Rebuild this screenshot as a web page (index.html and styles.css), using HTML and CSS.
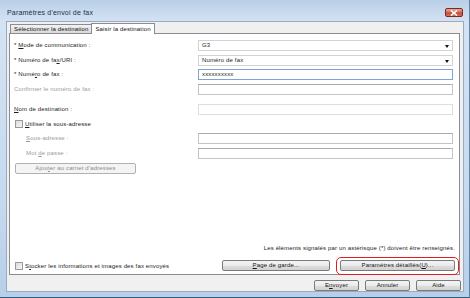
FILE: index.html
```html
<!DOCTYPE html>
<html lang="fr">
<head>
    <meta charset="UTF-8">
    <title>Paramètres d'envoi de fax</title>
    <link rel="stylesheet" href="styles.css">
</head>
<body>
    <div class="window">
        <div class="titlebar">
            <span class="title">Paramètres d'envoi de fax</span>
            <div class="close">
                <svg width="8" height="6" viewBox="0 0 8 6"><path d="M1 0.5 L7 5.5 M7 0.5 L1 5.5" stroke="#fff" stroke-width="1.6"/></svg>
            </div>
        </div>

        <div class="client">
            <div class="tabs">
                <div class="tab">Sélectionner la destination</div>
                <div class="tab active">Saisir la destination</div>
            </div>

            <div class="panel">
                <div class="form">
                    <label>* <u>M</u>ode de communication :</label>
                    <div class="field combo">G3<span class="arrow"></span></div>

                    <label>* Numéro de fa<u>x</u>/URI :</label>
                    <div class="field combo">Numéro de fax<span class="arrow"></span></div>

                    <label>* Numé<u>r</u>o de fax :</label>
                    <div class="field focus">xxxxxxxxxx</div>

                    <label class="off">Confirmer le numéro de fax :</label>
                    <div class="field"></div>
                </div>

                <div class="sep"></div>

                <div class="form single">
                    <label><u>N</u>om de destination :</label>
                    <div class="field faint"></div>
                </div>

                <div class="check-row sub-check">
                    <span class="box"></span>
                    <span><u>U</u>tiliser la sous-adresse</span>
                </div>

                <div class="form sub">
                    <label class="off indent"><u>S</u>ous-adresse :</label>
                    <div class="field"></div>

                    <label class="off indent">Mot <u>d</u>e passe :</label>
                    <div class="field"></div>
                </div>

                <button class="btn add-btn" disabled>Ajou<u>t</u>er au carnet d'adresses</button>

                <p class="note">Les éléments signalés par un astérisque (*) doivent être renseignés.</p>

                <div class="sep"></div>

                <div class="bottom-row">
                    <div class="check-row">
                        <span class="box"></span>
                        <span>S<u>t</u>ocker les informations et images des fax envoyés</span>
                    </div>
                    <button class="btn cover-btn"><u>P</u>age de garde...</button>
                    <button class="btn detail-btn">Paramètres détaillés(<u>U</u>)...</button>
                </div>
            </div>

            <div class="footer">
                <button class="btn">E<u>n</u>voyer</button>
                <button class="btn">Annuler</button>
                <button class="btn">Aide</button>
            </div>
        </div>
    </div>
</body>
</html>
```

FILE: styles.css
```css
* {
    box-sizing: border-box;
}
body {
    margin: 0;
    font-family: "Liberation Sans", Arial, sans-serif;
    font-size: 6px;
    letter-spacing: 0.15px;
    color: #1b1b1b;
}
u {
    text-decoration: underline;
}
.window {
    width: 470px;
    height: 298px;
    display: flex;
    flex-direction: column;
    padding: 0 5px 5px 6px;
    background: linear-gradient(#b9cfe7, #d4e3f3 22px, #c6d9ee 200px, #b7cfe8);
    border-bottom: 1px solid #2f5f7e;
    border-right: 1px solid #5c86a8;
}
.titlebar {
    height: 21px;
    flex: 0 0 21px;
    display: flex;
    align-items: flex-start;
    justify-content: space-between;
    padding-top: 8px;
    padding-left: 1px;
}
.title {
    font-size: 7px;
    line-height: 9px;
    letter-spacing: 0.2px;
    color: #1e2f47;
}
.close {
    width: 18px;
    height: 9px;
    margin-right: 1px;
    border: 1px solid #7a2a22;
    border-radius: 2px;
    background: linear-gradient(#e7a99c, #d6705f 45%, #c34834 55%, #d2735d);
    display: flex;
    align-items: center;
    justify-content: center;
}
.client {
    height: 271px;
    flex: 0 0 271px;
    background: #f0f0f0;
    border: 1px solid #98abc0;
    padding: 0 3px 0 2px;
    display: flex;
    flex-direction: column;
}
.tabs {
    display: flex;
    align-items: flex-end;
    height: 11px;
    padding-left: 1px;
}
.tab {
    height: 9px;
    line-height: 8px;
    padding: 0 3px;
    border: 1px solid #898c95;
    border-bottom: none;
    background: linear-gradient(#f3f3f3, #e6e6e6 50%, #d9d9d9);
    color: #111;
}
.tab.active {
    height: 11px;
    line-height: 10px;
    margin-left: -1px;
    margin-bottom: -1px;
    background: #fff;
    position: relative;
    z-index: 1;
}
.panel {
    height: 242px;
    border: 1px solid #898c95;
    background: #fff;
    padding: 6px 4px 3px 4px;
    display: flex;
    flex-direction: column;
}
.form {
    display: grid;
    grid-template-columns: 184px 255px;
    grid-auto-rows: 11px;
    row-gap: 3.67px;
    align-items: center;
}
.form label {
    line-height: 11px;
    white-space: nowrap;
}
.form label.off {
    color: #9a9a9a;
}
.form label.indent {
    padding-left: 12px;
}
.field {
    height: 11px;
    border: 1px solid #c2c4c9;
    border-top-color: #a9abb2;
    background: #fff;
    line-height: 9px;
    padding-left: 3px;
    position: relative;
}
.field.focus {
    border-color: #7ea4cf;
}
.field.faint {
    border-color: #dedede;
}
.combo {
    border-color: #d3d3d3;
}
.arrow {
    position: absolute;
    right: 3px;
    top: 4px;
    border-left: 2.5px solid transparent;
    border-right: 2.5px solid transparent;
    border-top: 3px solid #111;
}
.sep {
    height: 1px;
    background: #d5d5d5;
    border-bottom: 1px solid #fff;
    margin: 3px 2px 0 0;
}
.single {
    margin-top: 5px;
}
.check-row {
    display: flex;
    align-items: center;
    gap: 2px;
    height: 9px;
    padding-left: 1px;
    white-space: nowrap;
}
.sub-check {
    margin-top: 5px;
}
.box {
    width: 8px;
    height: 8px;
    border: 1px solid #9a9a9a;
    background: linear-gradient(135deg, #dcdcdc, #f6f6f6);
}
.sub {
    margin-top: 4px;
    row-gap: 4px;
}
.btn {
    height: 11px;
    padding: 0 4px;
    border: 1px solid #7a7a7a;
    border-radius: 2px;
    background: linear-gradient(#f4f4f4, #ebebeb 50%, #dedede 51%, #d2d2d2);
    font-family: inherit;
    font-size: 6px;
    letter-spacing: 0.15px;
    line-height: 9px;
    color: #111;
}
.btn:disabled {
    color: #8c8c8c;
    border-color: #adb2b5;
    background: #f4f4f4;
}
.add-btn {
    width: 121px;
    margin-top: 4px;
    margin-left: 1px;
}
.note {
    margin: auto 0 0 0;
    text-align: right;
    line-height: 8px;
}
.bottom-row {
    display: flex;
    align-items: center;
    height: 11px;
    margin-top: 4px;
}
.cover-btn {
    width: 108px;
    margin-left: auto;
}
.detail-btn {
    width: 115px;
    margin-left: 10px;
    position: relative;
}
.detail-btn::after {
    content: "";
    position: absolute;
    left: -5px;
    right: -5px;
    top: -4px;
    bottom: -5px;
    border: 1.5px solid #e01e1e;
    border-radius: 5px;
}
.footer {
    display: flex;
    justify-content: flex-end;
    gap: 6px;
    margin-top: 5px;
    margin-right: -1px;
}
.footer .btn {
    width: 45px;
}
```
